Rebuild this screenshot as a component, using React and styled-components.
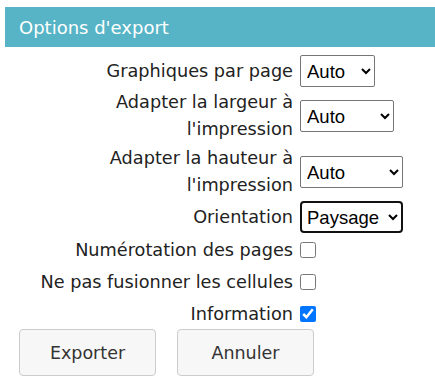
import React, { useState } from 'react'
import styled, { createGlobalStyle } from 'styled-components'

const GlobalStyle = createGlobalStyle`
  html, body {
    margin: 0;
    padding: 0;
    background: #ffffff;
  }
  body {
    font-family: "DejaVu Sans", Verdana, sans-serif;
    color: #222;
  }
`

const Page = styled.div`
  padding: 7px 0 0 5px;
  width: 430px;
`

const Header = styled.div`
  height: 40px;
  background: #56b4c6;
  color: #fff;
  font-size: 18px;
  display: flex;
  align-items: center;
  padding-left: 14px;
`

const Form = styled.div`
  display: grid;
  grid-template-columns: 265px auto;
  column-gap: 7px;
  row-gap: 2px;
  margin-top: 8px;
  padding-left: 23px;
  align-items: center;
`

const Label = styled.div`
  text-align: right;
  font-size: 17.7px;
  line-height: 27px;
  color: #222;
  min-height: ${p => (p.$tall ? '30px' : 'auto')};
  display: flex;
  align-items: center;
  justify-content: flex-end;
`

const Select = styled.select`
  width: ${p => p.$w}px;
  height: 32px;
  font-family: "Liberation Sans", Arial, sans-serif;
  font-size: 18.5px;
  color: #000;
  background: #fff;
  border: ${p => (p.$focused ? '2px solid #111' : '1px solid #767676')};
  border-radius: ${p => (p.$focused ? '4px' : '2px')};
  padding: 0 0 0 ${p => (p.$focused ? '1px' : '2px')};
  outline: none;
  justify-self: start;
`

const Check = styled.input`
  width: 16px;
  height: 16px;
  margin: 0;
  justify-self: start;
  accent-color: #0075ff;
`

const Buttons = styled.div`
  display: flex;
  gap: 21px;
  padding-left: 14px;
`

const Button = styled.button`
  width: 137px;
  height: 47px;
  background: #f7f7f7;
  border: 1px solid #cccccc;
  border-radius: 4px;
  font-family: "DejaVu Sans", Verdana, sans-serif;
  font-size: 17.5px;
  color: #333;
`

export default function App() {
  const [pages, setPages] = useState(false)
  const [merge, setMerge] = useState(false)
  const [info, setInfo] = useState(true)

  return (
    <Page>
      <GlobalStyle />
      <Header>Options d'export</Header>
      <Form>
        <Label>Graphiques par page</Label>
        <Select $w={75} defaultValue="auto">
          <option value="auto">Auto</option>
        </Select>

        <Label>Adapter la largeur à l'impression</Label>
        <Select $w={94} defaultValue="auto">
          <option value="auto">Auto</option>
          <option value="1">1 page</option>
        </Select>

        <Label>Adapter la hauteur à l'impression</Label>
        <Select $w={103} defaultValue="auto">
          <option value="auto">Auto</option>
          <option value="1">1 page</option>
        </Select>

        <Label>Orientation</Label>
        <Select $w={103} $focused defaultValue="paysage">
          <option value="paysage">Paysage</option>
          <option value="portrait">Portrait</option>
        </Select>

        <Label $tall>Numérotation des pages</Label>
        <Check type="checkbox" checked={pages} onChange={() => setPages(!pages)} />

        <Label $tall>Ne pas fusionner les cellules</Label>
        <Check type="checkbox" checked={merge} onChange={() => setMerge(!merge)} />

        <Label $tall>Information</Label>
        <Check type="checkbox" checked={info} onChange={() => setInfo(!info)} />
      </Form>
      <Buttons>
        <Button>Exporter</Button>
        <Button>Annuler</Button>
      </Buttons>
    </Page>
  )
}
